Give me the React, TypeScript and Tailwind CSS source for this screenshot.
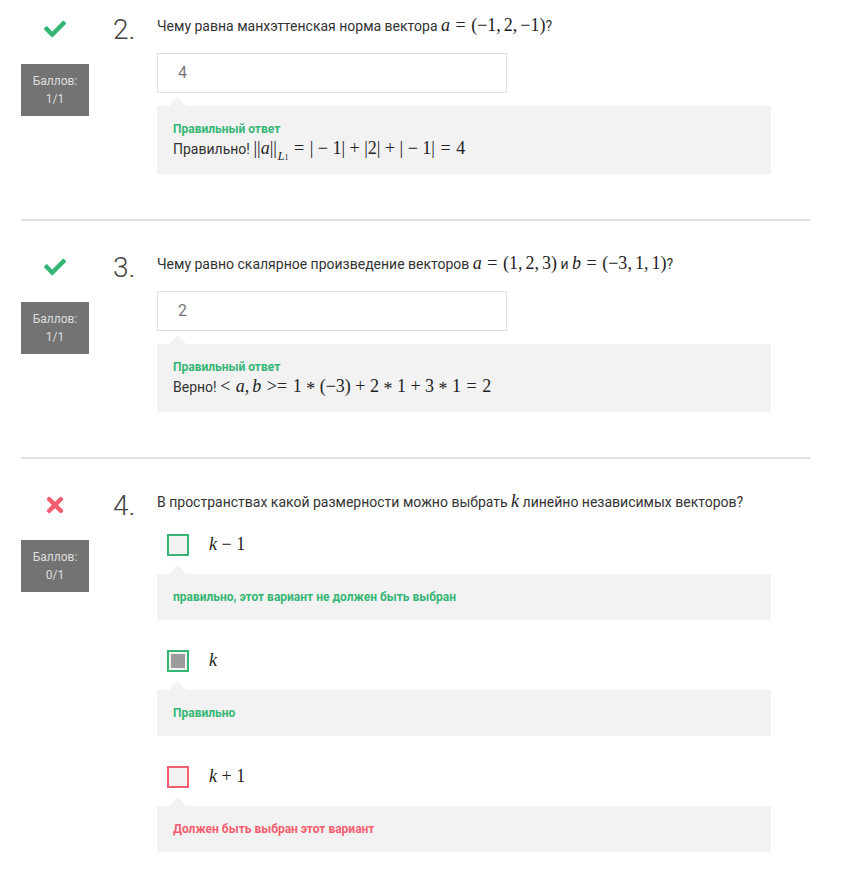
import type { ReactNode } from "react";
import { FaCheck, FaTimes } from "react-icons/fa";

// math helpers (KaTeX-like inline formulas)
function M({ children }: { children: ReactNode }) {
  return (
    <span className="font-['Liberation_Serif',serif] text-[18px] leading-none text-[#222] whitespace-nowrap">
      {children}
    </span>
  );
}
const V = ({ children }: { children: ReactNode }) => <i>{children}</i>;
const Rel = ({ children }: { children: ReactNode }) => (
  <span className="mx-[5.5px]">{children}</span>
);
const Op = ({ children }: { children: ReactNode }) => (
  <span className="mx-[4.5px]">{children}</span>
);
const C = () => <span className="mr-[3px]">,</span>;
const Star = () => (
  <span className="mx-[4.5px] relative top-[3px]">*</span>
);

function Notch() {
  return (
    <div className="absolute left-[14px] top-[-6.5px] w-[13px] h-[13px] bg-[#f2f2f2] rotate-45" />
  );
}

function Section({
  ok,
  score,
  num,
  first,
  last,
  children,
}: {
  ok: boolean;
  score: string;
  num: number;
  first?: boolean;
  last?: boolean;
  children: ReactNode;
}) {
  return (
    <div className={`flex ${first ? "pt-[14px]" : "pt-[31px]"} ${last ? "pb-[30px]" : "pb-[45px]"}`}>
      <div className="w-[89px] pl-[21px] shrink-0 flex flex-col items-center">
        <div className="mt-[6px] h-[18px] flex items-center">
          {ok ? (
            <FaCheck className="text-[#36b675]" size={22} />
          ) : (
            <FaTimes className="text-[#f25f70]" size={24} />
          )}
        </div>
        <div className="mt-[26px] w-[68px] h-[52px] bg-[#737373] text-[#dedede] text-[12px] leading-[18px] flex flex-col items-center justify-center">
          <span>Баллов:</span>
          <span>{score}</span>
        </div>
      </div>
      <div className="w-[68px] shrink-0 pl-[24px] pt-[2px] text-[28px] leading-[28px] font-light text-[#444]">
        {num}.
      </div>
      <div className="w-[614px]">{children}</div>
    </div>
  );
}

function Answer({ value }: { value: string }) {
  return (
    <div className="mt-[15px] w-[350px] h-[40px] border border-[#e0e0e0] pl-[20px] flex items-center text-[16px] text-[#777]">
      {value}
    </div>
  );
}

function Explain({ children }: { children: ReactNode }) {
  return (
    <div className="relative mt-[13px] bg-[#f2f2f2] pl-[16px] pt-[15px] pb-[13px]">
      <Notch />
      <div className="relative text-[12px] leading-[16px] font-bold text-[#36b675]">Правильный ответ</div>
      <div className="relative h-[24px] text-[14px] leading-[24px] text-[#333]">{children}</div>
    </div>
  );
}

function Option({
  label,
  checked,
  wrong,
  note,
  first,
}: {
  label: ReactNode;
  checked?: boolean;
  wrong?: boolean;
  note: string;
  first?: boolean;
}) {
  return (
    <div className={first ? "mt-[20px]" : "mt-[30px]"}>
      <div className="flex items-center h-[22px]">
        <div
          className={`ml-[10px] w-[22px] h-[22px] border-2 bg-[#f2f2f2] flex items-center justify-center ${
            wrong ? "border-[#f25f70]" : "border-[#36b675]"
          }`}
        >
          {checked && <div className="w-[14px] h-[14px] bg-[#9b9b9b]" />}
        </div>
        <div className="ml-[20px]">
          <M>{label}</M>
        </div>
      </div>
      <div className="relative mt-[18px] h-[46px] bg-[#f2f2f2] pl-[16px] flex items-center">
        <Notch />
        <span
          className={`relative text-[12px] leading-[16px] font-bold ${
            wrong ? "text-[#f25f70]" : "text-[#36b675]"
          }`}
        >
          {note}
        </span>
      </div>
    </div>
  );
}

function Divider() {
  return <div className="ml-[21px] w-[789px] h-[2px] bg-[#e1e1e1]" />;
}

export default function App() {
  return (
    <div className="min-h-screen bg-white font-[Roboto,sans-serif] text-[#333]">
      <Section ok score="1/1" num={2} first>
        <div className="h-[24px] text-[14px] leading-[24px]">
          Чему равна манхэттенская норма вектора{" "}
          <M>
            <V>a</V>
            <Rel>=</Rel>(−1<C />2<C />−1)
          </M>
          ?
        </div>
        <Answer value="4" />
        <Explain>
          Правильно!{" "}
          <M>
            ||<V>a</V>||
            <sub className="text-[12px] leading-none align-[-3px] ml-[1px]">
              <V>L</V>
              <span className="text-[8px]">1</span>
            </sub>
            <Rel>=</Rel>|<Op>−</Op>1|<Op>+</Op>|2|<Op>+</Op>|<Op>−</Op>1|<Rel>=</Rel>4
          </M>
        </Explain>
      </Section>
      <Divider />
      <Section ok score="1/1" num={3}>
        <div className="h-[24px] text-[14px] leading-[24px]">
          Чему равно скалярное произведение векторов{" "}
          <M>
            <V>a</V>
            <Rel>=</Rel>(1<C />2<C />3)
          </M>{" "}
          и{" "}
          <M>
            <V>b</V>
            <Rel>=</Rel>(−3<C />1<C />1)
          </M>
          ?
        </div>
        <Answer value="2" />
        <Explain>
          Верно!{" "}
          <M>
            <span className="mr-[5.5px]">&lt;</span>
            <V>a</V>
            <C />
            <V>b</V>
            <Rel>&gt;=</Rel>1<Star />(−3)<Op>+</Op>2<Star />1<Op>+</Op>3<Star />1<Rel>=</Rel>2
          </M>
        </Explain>
      </Section>
      <Divider />
      <Section ok={false} score="0/1" num={4} last>
        <div className="h-[24px] text-[14px] leading-[24px]">
          В пространствах какой размерности можно выбрать{" "}
          <M>
            <V>k</V>
          </M>{" "}
          линейно независимых векторов?
        </div>
        <Option
          first
          label={
            <>
              <V>k</V>
              <Op>−</Op>1
            </>
          }
          note="правильно, этот вариант не должен быть выбран"
        />
        <Option label={<V>k</V>} checked note="Правильно" />
        <Option
          wrong
          label={
            <>
              <V>k</V>
              <Op>+</Op>1
            </>
          }
          note="Должен быть выбран этот вариант"
        />
      </Section>
    </div>
  );
}
